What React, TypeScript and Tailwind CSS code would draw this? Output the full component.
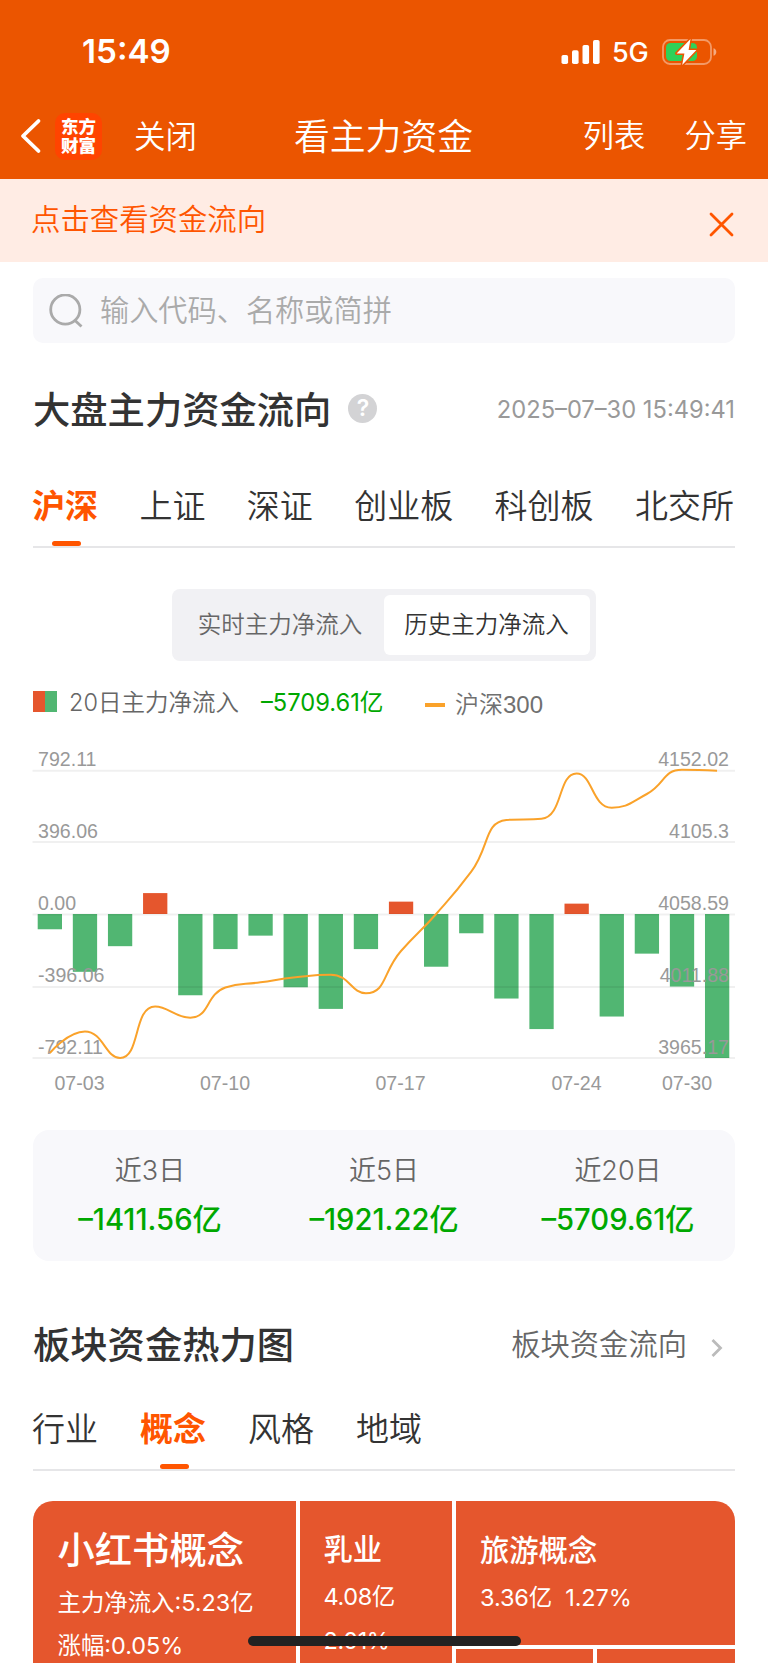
import React, { useState } from 'react';

const netInflow = [-84, -318, -177, 115, -447, -193, -119, -403, -522, -193, 68, -290, -106, -465, -633, 57, -564, -218, -399, -792.11];
const index300 = [1053, 1031.5, 1058, 1006.5, 1017.7, 987.5, 982.3, 977.3, 974.7, 993.3, 951, 914, 871.7, 820, 818.8, 773.5, 807.7, 794, 769.8, 770.7];

const gridLines = [
  { y: 770.7, left: '792.11', right: '4152.02' },
  { y: 842, left: '396.06', right: '4105.3' },
  { y: 914.5, left: '0.00', right: '4058.59' },
  { y: 987, left: '-396.06', right: '4011.88' },
  { y: 1058, left: '-792.11', right: '3965.17' },
];

const dates = [
  { x: 79.5, label: '07-03' },
  { x: 225, label: '07-10' },
  { x: 400.5, label: '07-17' },
  { x: 576.5, label: '07-24' },
  { x: 687, label: '07-30' },
];

type Point = [number, number];

const clampPoint = (p: Point, a: Point, b: Point): Point => [
  Math.min(Math.max(p[0], Math.min(a[0], b[0])), Math.max(a[0], b[0])),
  Math.min(Math.max(p[1], Math.min(a[1], b[1])), Math.max(a[1], b[1])),
];

// bezier smoothing, control points never leave the box of their segment
function smoothPath(points: Point[]) {
  let d = `M${points[0][0]} ${points[0][1]}`;
  let out = points[0];
  for (let i = 1; i < points.length; i++) {
    const prev = points[i - 1];
    const p = points[i];
    const next = points[i + 1];
    let into = p;
    let nextOut = p;
    if (next) {
      const d0 = Math.hypot(p[0] - prev[0], p[1] - prev[1]);
      const d1 = Math.hypot(next[0] - p[0], next[1] - p[1]);
      const r = (0.5 * d1) / (d0 + d1);
      nextOut = clampPoint([p[0] + (next[0] - prev[0]) * r, p[1] + (next[1] - prev[1]) * r], p, next);
      into = clampPoint([p[0] - ((nextOut[0] - p[0]) * d0) / d1, p[1] - ((nextOut[1] - p[1]) * d0) / d1], prev, p);
      nextOut = [p[0] + ((p[0] - into[0]) * d1) / d0, p[1] + ((p[1] - into[1]) * d1) / d0];
    }
    d += `C${out[0]} ${out[1]} ${into[0]} ${into[1]} ${p[0]} ${p[1]}`;
    out = nextOut;
  }
  return d;
}

function StatusBar() {
  return (
    <div className="flex h-[102px] items-center justify-between pt-[2px] pl-[82px] pr-[50px] text-white">
      <span className="text-[33.2px] font-semibold leading-none">15:49</span>
      <div className="flex items-center">
        <svg width="40" height="26" viewBox="0 0 40 26" fill="#fff">
          <rect x="0.5" y="16" width="6.6" height="9" rx="1.8" />
          <rect x="11" y="11.3" width="6.6" height="13.7" rx="1.8" />
          <rect x="21.5" y="6" width="6.6" height="19" rx="1.8" />
          <rect x="32" y="1" width="6.6" height="24" rx="1.8" />
        </svg>
        <span className="ml-[11px] w-[38px] text-[27px] font-[450] leading-none tracking-[-0.3px]">5G</span>
        <svg className="ml-[12px]" width="56" height="28" viewBox="0 0 56 28">
          <rect x="1" y="2" width="48" height="24" rx="7" fill="none" stroke="#fff" strokeOpacity="0.4" strokeWidth="1.8" />
          <path d="M51.5 10.2c2 .6 2.8 2 2.8 3.8s-.8 3.2-2.8 3.8z" fill="#fff" fillOpacity="0.5" />
          <rect x="4" y="5" width="31" height="18" rx="4.5" fill="#30d158" />
          <path d="M28.5 1L14.6 15.4h7.8L20.2 27 34.4 12h-7.8z" fill="#fff" stroke="#eb5500" strokeWidth="3" paintOrder="stroke" strokeLinejoin="round" />
        </svg>
      </div>
    </div>
  );
}

function NavBar() {
  return (
    <div className="flex h-[77px] items-center pl-[20px] pr-[21px] pb-[9px] text-white">
      <svg width="22" height="36" viewBox="0 0 22 36" fill="none" stroke="#fff" strokeWidth="3.8" strokeLinecap="round" strokeLinejoin="round">
        <path d="M18.5 3L3 18l15.5 15" />
      </svg>
      <div className="ml-[13px] flex h-[47px] w-[47px] flex-col items-center justify-center rounded-[10px] bg-[#ff4400] text-[17.5px] font-black leading-[19.5px]">
        <span>东方</span>
        <span>财富</span>
      </div>
      <span className="ml-[32px] w-[64px] pt-[1px] text-[31.5px] font-[350] leading-none">关闭</span>
      <span className="ml-[96px] w-[180px] pt-[3px] text-[35.8px] font-[350] leading-none">看主力资金</span>
      <span className="ml-auto pt-[2px] text-[31.3px] font-[350] leading-none">列表</span>
      <span className="ml-[39px] pt-[2px] text-[31.3px] font-[350] leading-none">分享</span>
    </div>
  );
}

function Tabs({ items, active, onChange, className }: {
  items: string[];
  active: string;
  onChange: (item: string) => void;
  className: string;
}) {
  return (
    <div className={`flex h-[58px] border-b-2 border-[#e6e6e8] text-[33px] leading-none text-[#333] ${className}`}>
      {items.map((item) => (
        <button
          key={item}
          onClick={() => onChange(item)}
          className={`relative flex flex-col items-center ${item === active ? 'font-bold text-[#ff5500]' : 'font-[350]'}`}
        >
          <span className="-ml-[1px] mr-[1px]">{item}</span>
          {item === active && <span className="absolute bottom-0 h-[5px] w-[29px] rounded-sm bg-[#ff5500]" />}
        </button>
      ))}
    </div>
  );
}

function FlowChart() {
  const points = index300.map((y, i): Point => [49.8 + i * 35.12, y]);
  return (
    <svg className="block" width="768" height="380" viewBox="0 740 768 380" fontFamily="Liberation Sans, Arial, sans-serif" fontSize="19.6">
      {netInflow.map((value, i) => {
        const h = (Math.abs(value) * 144) / 792.11;
        return (
          <rect key={i} x={37.7 + i * 35.12} y={value > 0 ? 914 - h : 914} width="24.3" height={h} fill={value > 0 ? '#e5562d' : '#51b672'} />
        );
      })}
      {gridLines.map((line, i) => (
        <g key={line.left}>
          <path d={`M32.5 ${line.y}H735`} stroke="#000" strokeOpacity="0.06" strokeWidth="2" />
          <text x="38" y={765.8 + i * 72.15} fill="#999">{line.left}</text>
          <text x="729" y={765.8 + i * 72.15} fill="#999" textAnchor="end">{line.right}</text>
        </g>
      ))}
      <path d={smoothPath(points)} fill="none" stroke="#faa22a" strokeWidth="2" />
      {dates.map((date) => (
        <text key={date.label} x={date.x} y="1090" fill="#999" textAnchor="middle">{date.label}</text>
      ))}
    </svg>
  );
}

const stats = [
  { label: '近3日', value: '–1411.56亿' },
  { label: '近5日', value: '–1921.22亿' },
  { label: '近20日', value: '–5709.61亿' },
];

export default function App() {
  const [market, setMarket] = useState('沪深');
  const [sector, setSector] = useState('概念');

  return (
    <div className="relative h-[1663px] w-[768px] overflow-hidden bg-white font-['Inter','Noto_Sans_CJK_SC',sans-serif]">
      <header className="h-[179px] bg-[#eb5500]">
        <StatusBar />
        <NavBar />
      </header>

      <div className="flex h-[82.5px] items-center justify-between bg-[#ffece4] pl-[31px] pr-[34px] text-[#ff5500]">
        <span className="pb-[1px] text-[29.4px] font-[350] leading-none">点击查看资金流向</span>
        <svg className="mt-[9px]" width="25" height="25" viewBox="0 0 25 25" stroke="#ff5500" strokeWidth="2.8" strokeLinecap="round">
          <path d="M2 2l21 21M23 2L2 23" />
        </svg>
      </div>

      <div className="mx-[33px] mt-[16.5px] flex h-[65px] items-center rounded-[10px] bg-[#f8f8fb] pl-4">
        <svg width="34" height="34" viewBox="0 0 34 34" fill="none" stroke="#aaa" strokeWidth="2.8">
          <circle cx="16.3" cy="15.5" r="14.6" />
          <path d="M25.5 26l7 6.5" />
        </svg>
        <span className="ml-[17px] pt-[1px] text-[29.2px] font-[350] leading-none text-[#aaa]">输入代码、名称或简拼</span>
      </div>

      <div className="mx-[33px] mt-[41px] flex h-[50px] items-center">
        <h2 className="pt-[4px] text-[37.3px] font-medium leading-none text-[#333]">大盘主力资金流向</h2>
        <span className="mb-[2px] ml-[17px] flex h-[29px] w-[29px] items-center justify-center rounded-full bg-[#d3d3d5] text-[23px] font-semibold text-white">?</span>
        <span className="ml-auto pt-[1px] text-[23.7px] font-[370] leading-none text-[#999]">2025–07–30 15:49:41</span>
      </div>

      <Tabs
        className="mx-[33px] mt-[56px] justify-between"
        items={['沪深', '上证', '深证', '创业板', '科创板', '北交所']}
        active={market}
        onChange={setMarket}
      />

      <div className="mx-auto mt-[41px] flex h-[72px] w-[424px] rounded-lg bg-[#f1f1f4] p-[6px] text-[23.5px] font-[350] leading-none">
        <button className="flex-1 pr-[2px] text-[#666]">实时主力净流入</button>
        <button className="w-[206px] rounded-md bg-white pr-[1px] text-[#333]">历史主力净流入</button>
      </div>

      <div className="mx-[33px] mt-[26px] flex h-[34px] items-center text-[23.5px] font-[350] leading-none text-[#666]">
        <span className="mb-[5px] flex h-[21px] w-[24px] overflow-hidden">
          <span className="flex-1 bg-[#e5562d]" />
          <span className="flex-1 bg-[#51b672]" />
        </span>
        <span className="mb-[2px] ml-[12px] w-[192px]">20日主力净流入</span>
        <span className="mb-[2px] w-[164px] text-[23.7px] font-normal text-[#00a800]">–5709.61亿</span>
        <span className="mt-[2px] h-1 w-[20px] bg-[#faa22a]" />
        <span className="ml-[10px] mt-[2px] font-['Liberation_Sans','Noto_Sans_CJK_SC',sans-serif] text-[24px] text-[#707070]">沪深300</span>
      </div>

      <div className="mt-[19px]">
        <FlowChart />
      </div>

      <div className="mx-[33px] mt-[9.5px] flex h-[131.5px] rounded-2xl bg-[#f8f8fb]">
        {stats.map((item) => (
          <div key={item.label} className="flex flex-1 flex-col items-center pt-[27px] leading-none">
            <span className="text-[27px] font-[350] text-[#666]">{item.label}</span>
            <span className="mt-[21px] text-[29.2px] font-medium text-[#00a800]">{item.value}</span>
          </div>
        ))}
      </div>

      <div className="mx-[33px] mt-[59.5px] flex h-[50px] items-center">
        <h2 className="text-[37.3px] font-medium leading-none text-[#333]">板块资金热力图</h2>
        <span className="ml-auto pb-[2px] text-[29.3px] font-[350] leading-none text-[#666]">板块资金流向</span>
        <svg className="ml-[24px] mr-[12px] mt-1" width="12" height="18" viewBox="0 0 12 18" fill="none" stroke="#bbb" strokeWidth="2.8">
          <path d="M1.5 1l8 8-8 8" />
        </svg>
      </div>

      <Tabs
        className="mx-[33px] mt-[42px] gap-[42px]"
        items={['行业', '概念', '风格', '地域']}
        active={sector}
        onChange={setSector}
      />

      <div className="mx-[33px] mt-[30px] flex h-[240px] gap-1 overflow-hidden rounded-[20px] text-white">
        <div className="w-[262.5px] bg-[#e5562d] pl-[24.5px] pt-[31px] leading-none">
          <div className="text-[37.3px] font-medium">小红书概念</div>
          <div className="mt-[22px] text-[23.4px]">主力净流入:5.23亿</div>
          <div className="mt-[20px] text-[23.4px]">涨幅:0.05%</div>
        </div>
        <div className="w-[152px] bg-[#e5562d] pl-[24px] pt-[34px] leading-none">
          <div className="text-[29.3px] font-medium">乳业</div>
          <div className="mt-[21px] text-[23.5px] tracking-[-0.4px]">4.08亿</div>
          <div className="mt-[21px] text-[23.5px] tracking-[-0.4px]">2.01%</div>
        </div>
        <div className="flex flex-1 flex-col gap-1">
          <div className="h-[144px] bg-[#e5562d] pl-[24.5px] pt-[35px] leading-none">
            <div className="text-[29.3px] font-medium">旅游概念</div>
            <div className="mt-[21px] flex gap-[13px] text-[23.5px] tracking-[-0.1px]">
              <span>3.36亿</span>
              <span>1.27%</span>
            </div>
          </div>
          <div className="flex flex-1 gap-1">
            <div className="flex-1 bg-[#e5562d]" />
            <div className="flex-1 bg-[#e5562d]" />
          </div>
        </div>
      </div>

      <div className="absolute bottom-[17px] left-[247.5px] h-[10px] w-[273.5px] rounded-full bg-[#222]" />
    </div>
  );
}
